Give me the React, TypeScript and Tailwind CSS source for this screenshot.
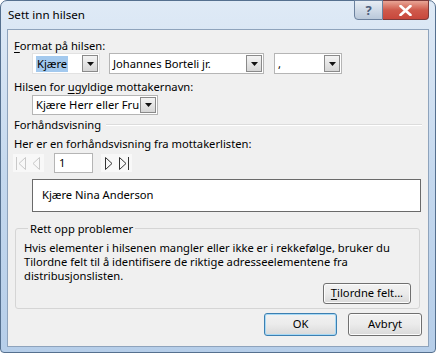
import React from 'react';

const font = { fontFamily: '"Noto Sans", "Open Sans", Arial, sans-serif' };

const Arrow: React.FC = () => (
  <div className="w-[16px] h-full flex items-center justify-center border border-[#8a8a8a] bg-gradient-to-b from-[#f4f4f4] to-[#d6d6d6]">
    <svg width="7" height="4" viewBox="0 0 7 4">
      <path d="M0 0 H7 L3.5 4 Z" fill="#111" />
    </svg>
  </div>
);

const Combo: React.FC<{ w: string; text: string; selected?: boolean; faint?: boolean }> = ({ w, text, selected, faint }) => (
  <div
    className={`${w} h-full flex items-stretch bg-white border p-[1px] ${faint ? 'border-[#e2e2e2]' : 'border-[#b5b5b5]'}`}
  >
    <div className="flex-1 flex items-center pl-[2px] overflow-hidden whitespace-nowrap">
      <span className={selected ? 'bg-[#a3c9ee] px-[1px] leading-[16px]' : 'leading-[16px]'}>{text}</span>
    </div>
    <Arrow />
  </div>
);

const Btn: React.FC<{ w: string; h: string; def?: boolean; children: React.ReactNode }> = ({ w, h, def, children }) => (
  <button
    className={`${w} ${h} rounded-[3px] border ${
      def ? 'border-[#3c7fb1] shadow-[inset_0_0_0_1px_#a7d9f5]' : 'border-[#707070] shadow-[inset_0_0_0_1px_#fcfcfc]'
    } bg-gradient-to-b from-[#f2f2f2] via-[#ebebeb] to-[#d9d9d9] text-[11.2px] text-black flex items-center justify-center`}
  >
    {children}
  </button>
);

const NavIcon: React.FC<{ dir: 'first' | 'prev' | 'next' | 'last'; color: string }> = ({ dir, color }) => {
  const left = dir === 'first' || dir === 'prev';
  const bar = dir === 'first' || dir === 'last';
  return (
    <div className="w-[14px] h-[18px] flex items-center justify-center bg-[#f8f8f8]">
      <svg width="12" height="15" viewBox="0 0 12 15">
        {left ? (
          <>
            {bar && <line x1="1.5" y1="1" x2="1.5" y2="14" stroke={color} />}
            <path d={bar ? 'M10.5 1.5 L4 7.5 L10.5 13.5 Z' : 'M9.5 1.5 L3 7.5 L9.5 13.5 Z'} fill="none" stroke={color} />
          </>
        ) : (
          <>
            <path d={bar ? 'M1.5 1.5 L8 7.5 L1.5 13.5 Z' : 'M2.5 1.5 L9 7.5 L2.5 13.5 Z'} fill="none" stroke={color} />
            {bar && <line x1="10.5" y1="1" x2="10.5" y2="14" stroke={color} />}
          </>
        )}
      </svg>
    </div>
  );
};

export default function App() {
  return (
    <div
      style={font}
      className="w-[436px] h-[353px] rounded-t-[7px] rounded-b-[4px] border border-[#55708f] bg-gradient-to-b from-[#dfeaf6] via-[#c4d8ee] to-[#b6cee9] flex flex-col text-[11.2px] text-black"
    >
      {/* title bar */}
      <div className="h-[28px] flex items-start justify-between">
        <div className="pl-[7px] pt-[5px] leading-[18px] text-[11.6px] text-black">Sett inn hilsen</div>
        <div className="flex mr-[6px] -mt-[1px]">
          <div className="w-[29px] h-[20px] rounded-bl-[4px] border border-[#6b819e] bg-gradient-to-b from-[#e7edf4] to-[#b9c8da] flex items-center justify-center">
            <span className="text-[13px] leading-none font-bold text-[#4c5d7b]">?</span>
          </div>
          <div className="w-[46px] h-[20px] rounded-br-[4px] border border-l-0 border-[#7d3a3a] bg-gradient-to-b from-[#e8a596] via-[#cf5a4c] to-[#c8473c] flex items-center justify-center">
            <svg width="13" height="11" viewBox="0 0 13 11">
              <path d="M1.5 1 L11.5 10 M11.5 1 L1.5 10" stroke="#fff" strokeWidth="2.6" strokeLinecap="round" />
            </svg>
          </div>
        </div>
      </div>

      {/* client */}
      <div className="mx-[6px] h-[318px] border border-[#8ea3bc] bg-[#f0f0f0] flex flex-col pt-[8px]">
        <div className="ml-[6px] leading-[15px]">
          <span className="underline underline-offset-2">F</span>ormat på hilsen:
        </div>
        <div className="h-[21px] flex ml-[24px]">
          <Combo w="w-[68px]" text="Kjære" selected faint />
          <div className="w-[9px]" />
          <Combo w="w-[155px]" text="Johannes Borteli jr." />
          <div className="w-[10px]" />
          <Combo w="w-[68px]" text="," />
        </div>
        <div className="ml-[6px] mt-[5px] leading-[15px]">
          Hilsen for <span className="underline underline-offset-2">u</span>gyldige mottakernavn:
        </div>
        <div className="h-[20px] flex ml-[24px] mt-[1px]">
          <Combo w="w-[126px]" text="Kjære Herr eller Fru" />
        </div>
        <div className="flex items-center ml-[6px] mr-[6px] mt-[2px] leading-[15px]">
          <span>Forhåndsvisning</span>
          <div className="flex-1 ml-[5px] border-t border-[#dcdcdc] border-b border-b-white" />
        </div>
        <div className="ml-[6px] mt-[4px] leading-[15px]">Her er en forhåndsvisning fra mottakerlisten:</div>
        <div className="h-[20px] flex items-center mt-[2px] ml-[5px]">
          <div className="flex gap-[1px] bg-[#f8f8f8] px-[1px]">
            <NavIcon dir="first" color="#c9c9c9" />
            <NavIcon dir="prev" color="#c9c9c9" />
          </div>
          <div className="w-[39px] h-[20px] ml-[10px] bg-white border border-[#b5b5b5] flex items-center pl-[4px]">1</div>
          <div className="flex gap-[1px] ml-[8px] bg-[#f8f8f8] px-[1px]">
            <NavIcon dir="next" color="#333" />
            <NavIcon dir="last" color="#333" />
          </div>
        </div>
        <div className="ml-[24px] w-[389px] h-[33px] mt-[6px] bg-white border border-[#6a6a6a] flex items-center pl-[9px]">
          Kjære Nina Anderson
        </div>
        <fieldset className="ml-[7px] w-[405px] mt-[9px] border border-[#d5d5d5] rounded-[3px] pt-[5px] px-[8px] pb-[4px]">
          <legend className="ml-[4px] px-[2px] leading-[15px]">Rett opp problemer</legend>
          <p className="leading-[14px] whitespace-nowrap">
            Hvis elementer i hilsenen mangler eller ikke er i rekkefølge, bruker du
            <br />
            Tilordne felt til å identifisere de riktige adresseelementene fra
            <br />
            distribusjonslisten.
          </p>
          <div className="flex justify-end">
            <Btn w="w-[88px]" h="h-[21px]">
              <span>
                <span className="underline underline-offset-2">T</span>ilordne felt...
              </span>
            </Btn>
          </div>
        </fieldset>
        <div className="flex justify-end gap-[11px] mr-[6px] mt-[4px]">
          <Btn w="w-[73px]" h="h-[23px]" def>
            OK
          </Btn>
          <Btn w="w-[74px]" h="h-[23px]">
            Avbryt
          </Btn>
        </div>
      </div>
    </div>
  );
}
